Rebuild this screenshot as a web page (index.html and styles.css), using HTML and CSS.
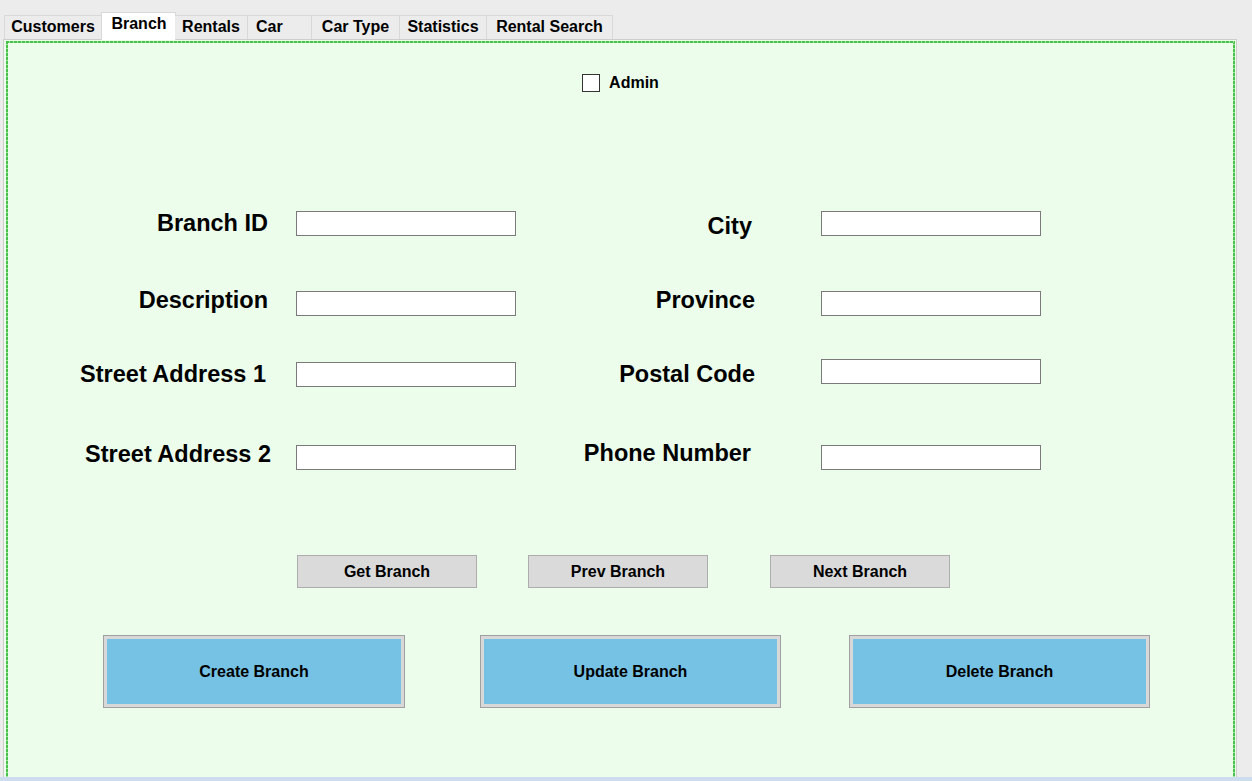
FILE: index.html
```html
<!DOCTYPE html>
<html>
<head>
<meta charset="utf-8">
<link rel="stylesheet" href="styles.css">
</head>
<body>
<div class="window">
  <div class="tabs">
    <div class="tab tab-customers">Customers</div>
    <div class="tab tab-branch active">Branch</div>
    <div class="tab tab-rentals">Rentals</div>
    <div class="tab tab-car">Car</div>
    <div class="tab tab-cartype">Car Type</div>
    <div class="tab tab-stats">Statistics</div>
    <div class="tab tab-search">Rental Search</div>
  </div>
  <div class="panel">
    <div class="inner">
      <div class="admin-row">
        <span class="checkbox"></span>
        <span class="admin-label">Admin</span>
      </div>

      <div class="form">
        <div class="row row1">
          <div class="label">Branch ID</div>
          <div class="field"><span class="textbox"></span></div>
          <div class="label label-right city">City</div>
          <div class="field"><span class="textbox"></span></div>
        </div>
        <div class="row row2">
          <div class="label">Description</div>
          <div class="field"><span class="textbox"></span></div>
          <div class="label label-right">Province</div>
          <div class="field"><span class="textbox"></span></div>
        </div>
        <div class="row row3">
          <div class="label shift">Street Address 1</div>
          <div class="field shift"><span class="textbox"></span></div>
          <div class="label label-right shift">Postal Code</div>
          <div class="field"><span class="textbox"></span></div>
        </div>
        <div class="row row4">
          <div class="label addr2">Street Address 2</div>
          <div class="field"><span class="textbox"></span></div>
          <div class="label label-right phone">Phone Number</div>
          <div class="field"><span class="textbox"></span></div>
        </div>
      </div>

      <div class="nav-buttons">
        <div class="btn-small">Get Branch</div>
        <div class="btn-small">Prev Branch</div>
        <div class="btn-small next">Next Branch</div>
      </div>

      <div class="action-buttons">
        <div class="btn-big">Create Branch</div>
        <div class="btn-big update">Update Branch</div>
        <div class="btn-big delete">Delete Branch</div>
      </div>
    </div>
  </div>
  <div class="bottom-strip"></div>
</div>
</body>
</html>
```

FILE: styles.css
```css
* { box-sizing: border-box; }

html, body {
  margin: 0;
  padding: 0;
  background: #ececec;
  font-family: "Liberation Sans", Arial, sans-serif;
  font-weight: bold;
  color: #000;
}

.window {
  width: 1252px;
  height: 781px;
  display: flex;
  flex-direction: column;
  overflow: hidden;
}

/* Tabs */
.tabs {
  display: flex;
  align-items: flex-end;
  height: 39px;
  padding-left: 4px;
  position: relative;
  z-index: 2;
}

.tab {
  height: 24px;
  border: 1px solid #d9d9d9;
  border-bottom: none;
  border-left: none;
  background: #ececec;
  font-size: 16px;
  line-height: 22px;
  text-align: center;
  white-space: nowrap;
}

.tab-customers { width: 98px; border-left: 1px solid #d9d9d9; }
.tab-branch { width: 74px; }
.tab-rentals { width: 73px; }
.tab-car { width: 64px; text-align: left; padding-left: 8px; }
.tab-cartype { width: 88px; }
.tab-stats { width: 87px; }
.tab-search { width: 126px; }

.tab.active {
  height: 28px;
  background: #fff;
  border-left: 1px solid #d9d9d9;
  margin-bottom: -1px;
  margin-left: -1px;
  width: 75px;
  margin-right: -1px;
  border-right: 1px solid #d9d9d9;
  padding-left: 1px;
}

/* Panel */
.panel {
  margin-left: 3px;
  width: 1234px;
  height: 738px;
  border: 1px solid #cdcdcd;
  border-bottom: none;
  padding: 1px 1px 0 2px;
  background: #ecfdec;
  position: relative;
  z-index: 1;
}

.inner {
  height: 100%;
  background:
    repeating-linear-gradient(90deg, #48c248 0 3px, #9fe29f 3px 4px) top left / 100% 2px no-repeat,
    repeating-linear-gradient(180deg, #48c248 0 3px, #9fe29f 3px 4px) top left / 2px 100% no-repeat,
    repeating-linear-gradient(180deg, #48c248 0 3px, #9fe29f 3px 4px) top right / 2px 100% no-repeat,
    #ecfdec;
  padding-top: 32px;
  display: flex;
  flex-direction: column;
}

/* Admin */
.admin-row {
  display: flex;
  align-items: center;
  justify-content: center;
  height: 19px;
  gap: 9px;
}

.checkbox {
  width: 18px;
  height: 18px;
  border: 1px solid #333;
  background: #fff;
}

.admin-label {
  font-size: 16px;
  line-height: 19px;
}

/* Form */
.form {
  margin-top: 119px;
  margin-left: 54px;
  display: flex;
  flex-direction: column;
}

.row {
  display: grid;
  grid-template-columns: 236px 220px 305px 220px;
  align-items: start;
}

.row1 { height: 80px; }
.row2 { height: 68px; }
.row3 { height: 86px; }
.row4 { height: 25px; }

.label {
  font-size: 23.5px;
  line-height: 25px;
  text-align: right;
  padding-right: 28px;
  white-space: nowrap;
}

.label-right {
  padding-right: 66px;
}

.row2 .label { margin-top: -3px; }
.city { margin-top: 3px; padding-right: 69px; }
.shift { margin-top: 3px; }
.row3 .label { padding-right: 30px; }
.row3 .label-right { padding-right: 66px; }
.addr2 { padding-right: 25px; margin-top: -3px; }
.phone { padding-right: 70px; margin-top: -4px; }

.textbox {
  display: block;
  width: 220px;
  height: 25px;
  background: #fff;
  border: 1px solid #7a7a7a;
}

/* Buttons */
.nav-buttons {
  display: flex;
  margin-top: 85px;
  margin-left: 291px;
  gap: 51px;
}

.btn-small {
  width: 180px;
  height: 33px;
  background: #dadada;
  border: 1px solid #adadad;
  font-size: 16px;
  display: flex;
  align-items: center;
  justify-content: center;
}

.btn-small.next { margin-left: 11px; }

.action-buttons {
  display: flex;
  margin-top: 47px;
  margin-left: 97px;
  gap: 75px;
}

.btn-big {
  width: 302px;
  height: 73px;
  background: #76c2e4;
  border: 1px solid #a0a0a0;
  box-shadow: inset 0 0 0 3px #d8d8d8;
  font-size: 16px;
  display: flex;
  align-items: center;
  justify-content: center;
}

.btn-big.update { width: 301px; }
.btn-big.delete { width: 301px; margin-left: -7px; }

.bottom-strip {
  height: 4px;
  background: #cddcee;
}
```
